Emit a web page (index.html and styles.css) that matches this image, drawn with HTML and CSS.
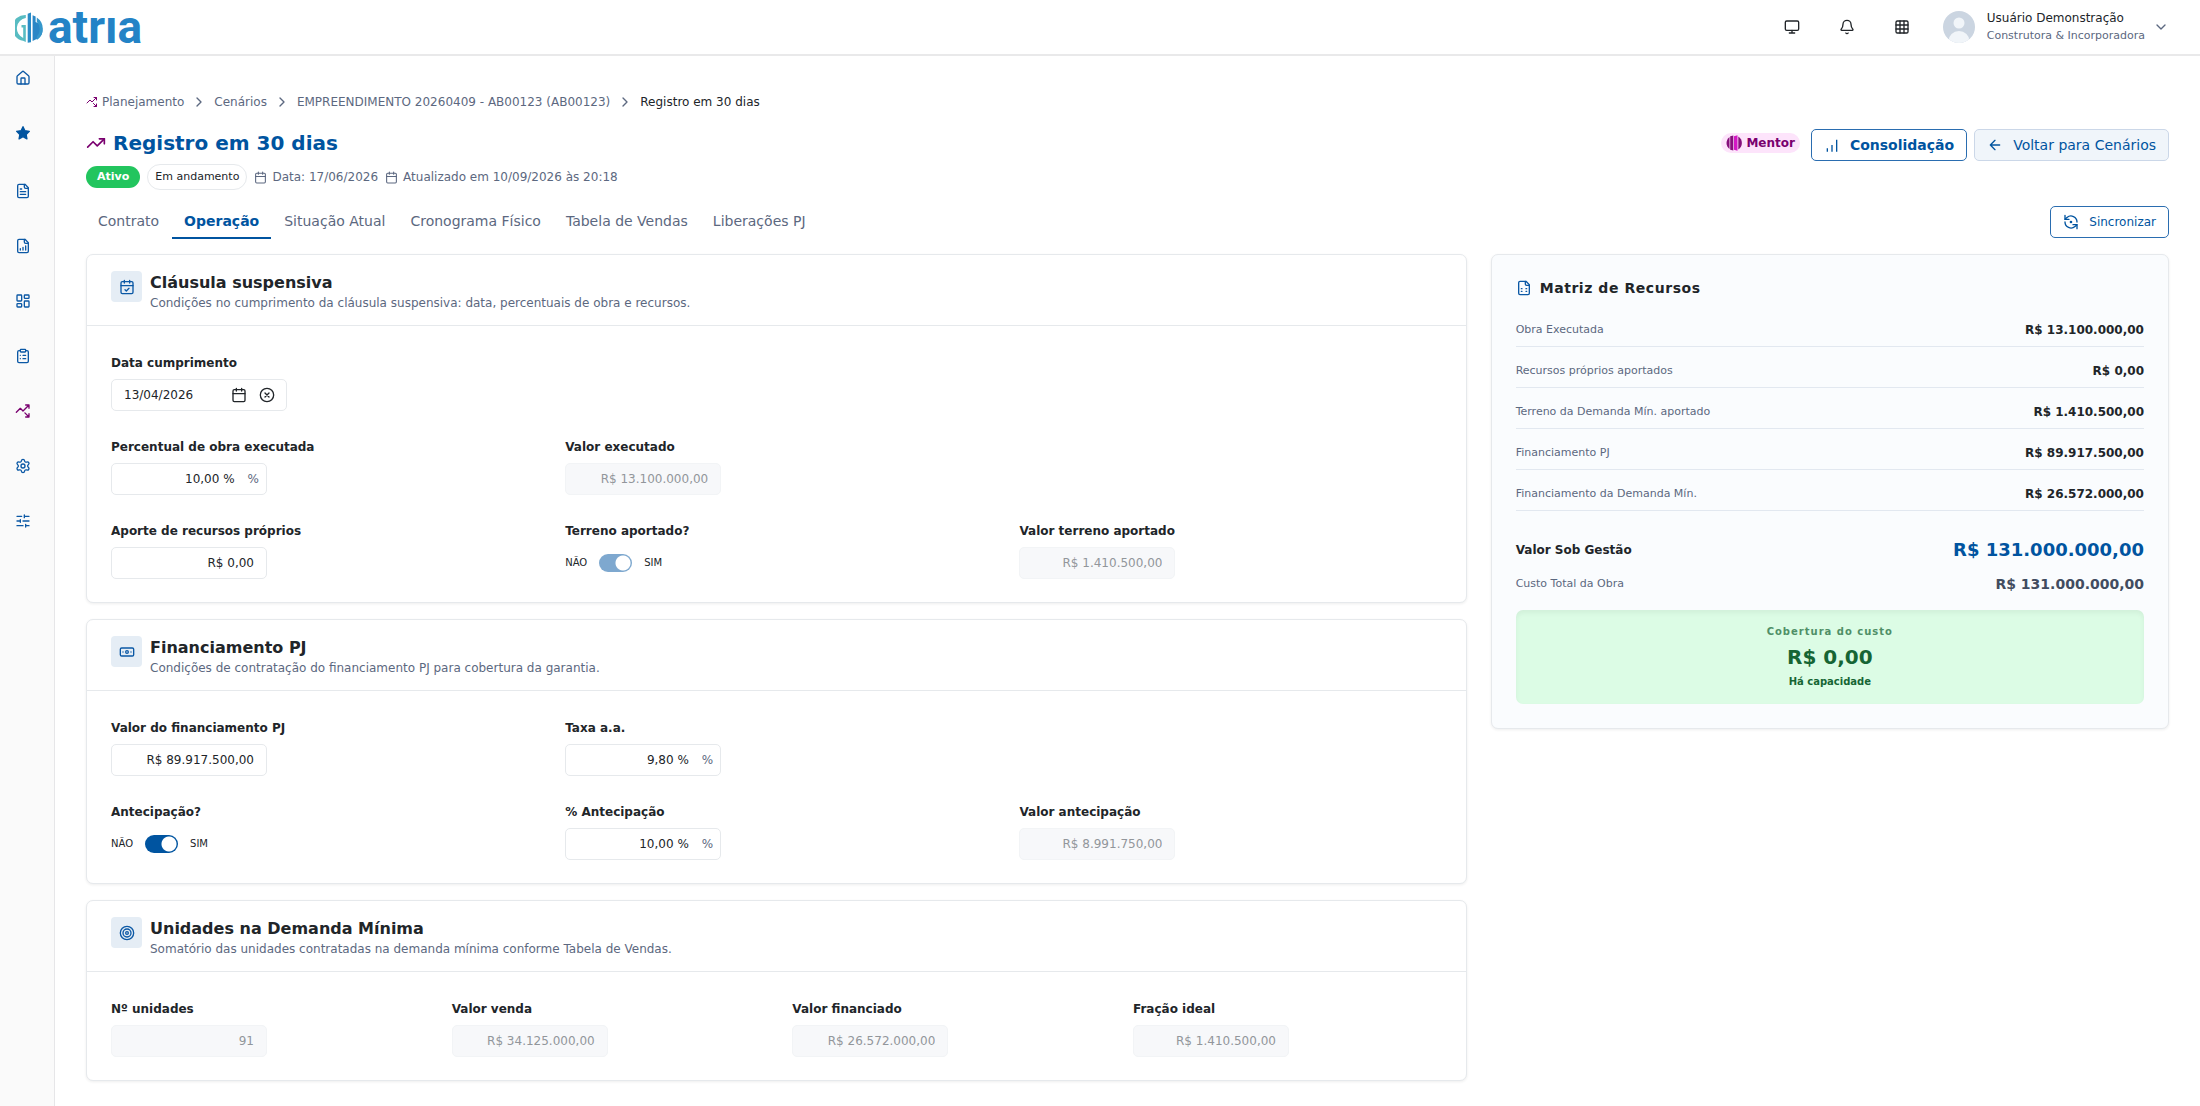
FILE: index.html
```
<!DOCTYPE html>
<html lang="pt-BR">
<head>
  <meta charset="UTF-8">
  <title>Registro em 30 dias - atria</title>
  <meta name="viewport" content="width=device-width, initial-scale=1.0">
  <link rel="stylesheet" href="styles.css">
</head>
<body>
  <!-- Shared icons -->
  <svg class="sprite" aria-hidden="true">
    <symbol id="i-calendar" viewBox="0 0 24 24"><path d="M8 2v4M16 2v4M3 10h18"/><rect width="18" height="18" x="3" y="4" rx="2"/></symbol>
    <symbol id="i-fork" viewBox="0 0 24 24"><path d="M14.828 14.828 21 21M21 16v5h-5M21 3l-9 9-4-4-6 6M21 8V3h-5"/></symbol>
    <symbol id="i-chevron" viewBox="0 0 24 24"><path d="m9 18 6-6-6-6"/></symbol>
  </svg>

  <header class="topbar">
    <a href="#" class="logo">
      <svg class="logo-mark" viewBox="0 0 28 31" aria-hidden="true">
        <path d="M10.800 3A13 13 0 0 0 8 28.800L10.800 30V13H6.500v2.500H8.200v10.500A10.500 10.500 0 0 1 10.800 6z" fill="#58bcc2"/>
        <path d="M12.700 1.800 16 .5v29.700l-3.300.6z" fill="#2a8cc6"/>
        <path d="M17.600 3.200 20.600 4.500V10a9 9 0 0 1 0 17.500l-3 1.500z" fill="#2a86c6"/>
        <path d="M21.800 5.500a13.500 13.500 0 0 1 0 22.500v-3.200a11 11 0 0 0 0-15z" fill="#3597cb"/>
      </svg>
      <span class="logo-text">atrıa</span>
    </a>
    <div class="top-actions">
      <button class="icon-btn" aria-label="Tela"><svg class="icon" viewBox="0 0 24 24"><rect width="20" height="14" x="2" y="3" rx="2"/><path d="M8 21h8M12 17v4"/></svg></button>
      <button class="icon-btn" aria-label="Notificações"><svg class="icon" viewBox="0 0 24 24"><path d="M10.268 21a2 2 0 0 0 3.464 0"/><path d="M3.262 15.326A1 1 0 0 0 4 17h16a1 1 0 0 0 .74-1.673C19.410 13.956 18 12.499 18 8A6 6 0 0 0 6 8c0 4.499-1.411 5.956-2.738 7.326"/></svg></button>
      <button class="icon-btn" aria-label="Aplicativos"><svg class="icon" viewBox="0 0 24 24"><rect width="18" height="18" x="3" y="3" rx="2"/><path d="M3 9h18M3 15h18M9 3v18M15 3v18"/></svg></button>
      <button class="user">
        <svg class="avatar" viewBox="0 0 32 32" aria-hidden="true">
          <clipPath id="round"><circle cx="16" cy="16" r="16"/></clipPath>
          <g clip-path="url(#round)"><rect width="32" height="32" fill="#cbd5e1"/><circle cx="16" cy="12" r="5.500" fill="#f1f5f9"/><ellipse cx="16" cy="30" rx="10.500" ry="10" fill="#f1f5f9"/></g>
        </svg>
        <span class="user-info">
          <span class="user-name">Usuário Demonstração</span>
          <span class="user-company">Construtora &amp; Incorporadora</span>
        </span>
        <svg class="icon muted" viewBox="0 0 24 24"><path d="m6 9 6 6 6-6"/></svg>
      </button>
    </div>
  </header>

  <div class="layout">
    <nav class="sidebar" aria-label="Menu principal">
      <a href="#" aria-label="Início"><svg class="icon" viewBox="0 0 24 24"><path d="M15 21v-8a1 1 0 0 0-1-1h-4a1 1 0 0 0-1 1v8"/><path d="M3 10a2 2 0 0 1 .709-1.528l7-5.999a2 2 0 0 1 2.582 0l7 5.999A2 2 0 0 1 21 10v9a2 2 0 0 1-2 2H5a2 2 0 0 1-2-2z"/></svg></a>
      <a href="#" class="favorites" aria-label="Favoritos"><svg class="icon filled" viewBox="0 0 24 24"><path d="M12 2.500l2.900 6.100 6.600.9-4.800 4.600 1.200 6.700-5.900-3.200-5.900 3.200 1.200-6.700L2.500 9.500l6.600-.9z"/></svg></a>
      <a href="#" aria-label="Documentos"><svg class="icon" viewBox="0 0 24 24"><path d="M15 2H6a2 2 0 0 0-2 2v16a2 2 0 0 0 2 2h12a2 2 0 0 0 2-2V7z"/><path d="M14 2v4a2 2 0 0 0 2 2h4M10 9H8M16 13H8M16 17H8"/></svg></a>
      <a href="#" aria-label="Relatórios"><svg class="icon" viewBox="0 0 24 24"><path d="M15 2H6a2 2 0 0 0-2 2v16a2 2 0 0 0 2 2h12a2 2 0 0 0 2-2V7z"/><path d="M14 2v4a2 2 0 0 0 2 2h4M8 18v-2M12 18v-4M16 18v-6"/></svg></a>
      <a href="#" aria-label="Painel"><svg class="icon" viewBox="0 0 24 24"><rect width="7" height="9" x="3" y="3" rx="1"/><rect width="7" height="5" x="14" y="3" rx="1"/><rect width="7" height="9" x="14" y="12" rx="1"/><rect width="7" height="5" x="3" y="16" rx="1"/></svg></a>
      <a href="#" aria-label="Tarefas"><svg class="icon" viewBox="0 0 24 24"><rect width="8" height="4" x="8" y="2" rx="1"/><path d="M16 4h2a2 2 0 0 1 2 2v14a2 2 0 0 1-2 2H6a2 2 0 0 1-2-2V6a2 2 0 0 1 2-2h2M12 11h4M12 16h4M8 11h.01M8 16h.01"/></svg></a>
      <a href="#" class="active" aria-label="Planejamento"><svg class="icon"><use href="#i-fork"/></svg></a>
      <a href="#" aria-label="Configurações"><svg class="icon" viewBox="0 0 24 24"><path d="M9.671 4.136a2.340 2.340 0 0 1 4.659 0 2.340 2.340 0 0 0 3.319 1.915 2.340 2.340 0 0 1 2.330 4.033 2.340 2.340 0 0 0 0 3.831 2.340 2.340 0 0 1-2.330 4.033 2.340 2.340 0 0 0-3.319 1.915 2.340 2.340 0 0 1-4.659 0 2.340 2.340 0 0 0-3.320-1.915 2.340 2.340 0 0 1-2.330-4.033 2.340 2.340 0 0 0 0-3.831A2.340 2.340 0 0 1 6.350 6.051a2.340 2.340 0 0 0 3.319-1.915"/><circle cx="12" cy="12" r="3"/></svg></a>
      <a href="#" aria-label="Parâmetros"><svg class="icon" viewBox="0 0 24 24"><path d="M10 5H3M12 19H3M14 3v4M16 17v4M21 12h-9M21 19h-5M21 5h-7M8 10v4M8 12H3"/></svg></a>
    </nav>

    <main>
      <nav class="breadcrumb" aria-label="Trilha">
        <a href="#"><svg class="icon accent"><use href="#i-fork"/></svg>Planejamento</a>
        <svg class="icon"><use href="#i-chevron"/></svg>
        <a href="#">Cenários</a>
        <svg class="icon"><use href="#i-chevron"/></svg>
        <a href="#">EMPREENDIMENTO 20260409 - AB00123 (AB00123)</a>
        <svg class="icon"><use href="#i-chevron"/></svg>
        <span class="current">Registro em 30 dias</span>
      </nav>

      <div class="page-head">
        <div>
          <div class="title-row">
            <svg class="icon accent" viewBox="0 0 24 24"><path d="M16 7h6v6"/><path d="m22 7-8.500 8.500-5-5L2 17"/></svg>
            <h1>Registro em 30 dias</h1>
          </div>
          <div class="meta">
            <span class="badge badge-active">Ativo</span>
            <span class="badge badge-outline">Em andamento</span>
            <span class="meta-item"><svg class="icon"><use href="#i-calendar"/></svg>Data: 17/06/2026</span>
            <span class="meta-item"><svg class="icon"><use href="#i-calendar"/></svg>Atualizado em 10/09/2026 às 20:18</span>
          </div>
        </div>
        <div class="page-actions">
          <span class="mentor">
            <svg class="mentor-mark" viewBox="0 0 16 16" aria-hidden="true">
              <path d="M3.500 2v12A7.500 7.500 0 0 1 3.500 2z" fill="#86107c"/><path d="M4.200 1.300 7.300.5v15l-3.100-.8z" fill="#86107c"/><path d="M8 1.200 11.500.2v15.600L8 14.800z" fill="#d417c4"/><path d="M12.300 1.500v13a7.700 7.700 0 0 0 0-13z" fill="#86107c"/>
            </svg>
            Mentor
          </span>
          <button class="btn btn-strong"><svg class="icon thin" viewBox="0 0 24 24"><path d="M5 22v-5M12 22V12M19 22V4"/></svg>Consolidação</button>
          <button class="btn btn-soft"><svg class="icon" viewBox="0 0 24 24"><path d="m12 19-7-7 7-7M19 12H5"/></svg>Voltar para Cenários</button>
        </div>
      </div>

      <div class="tabs-row">
        <nav class="tabs" aria-label="Seções">
          <a href="#">Contrato</a>
          <a href="#" class="active">Operação</a>
          <a href="#">Situação Atual</a>
          <a href="#">Cronograma Físico</a>
          <a href="#">Tabela de Vendas</a>
          <a href="#">Liberações PJ</a>
        </nav>
        <button class="btn btn-small"><svg class="icon" viewBox="0 0 24 24"><path d="M3 2v6h6"/><path d="M21 12A9 9 0 0 0 6 5.300L3 8"/><path d="M21 22v-6h-6"/><path d="M3 12a9 9 0 0 0 15 6.700l3-2.700"/><circle cx="12" cy="12" r="1"/></svg>Sincronizar</button>
      </div>

      <div class="content">
        <div class="cards">
          <section class="card">
            <div class="card-head">
              <span class="card-icon"><svg class="icon" viewBox="0 0 24 24"><path d="M8 2v4M16 2v4M3 10h18M9 16l2 2 4-4"/><rect width="18" height="18" x="3" y="4" rx="2"/></svg></span>
              <div>
                <h2>Cláusula suspensiva</h2>
                <p>Condições no cumprimento da cláusula suspensiva: data, percentuais de obra e recursos.</p>
              </div>
            </div>
            <div class="card-body">
              <div class="fields cols-3">
                <div class="field">
                  <label for="dataCumprimento">Data cumprimento</label>
                  <div class="control control-date">
                    <input type="text" id="dataCumprimento" value="13/04/2026">
                    <button aria-label="Abrir calendário"><svg class="icon"><use href="#i-calendar"/></svg></button>
                    <button aria-label="Limpar data"><svg class="icon" viewBox="0 0 24 24"><circle cx="12" cy="12" r="10"/><path d="m15 9-6 6M9 9l6 6"/></svg></button>
                  </div>
                </div>
              </div>
              <div class="fields cols-3">
                <div class="field">
                  <label for="percObra">Percentual de obra executada</label>
                  <div class="control"><input type="text" id="percObra" value="10,00 %"><span class="suffix">%</span></div>
                </div>
                <div class="field">
                  <label for="valorExecutado">Valor executado</label>
                  <div class="control disabled"><input type="text" id="valorExecutado" value="R$ 13.100.000,00" disabled></div>
                </div>
              </div>
              <div class="fields cols-3">
                <div class="field">
                  <label for="aporte">Aporte de recursos próprios</label>
                  <div class="control"><input type="text" id="aporte" value="R$ 0,00"></div>
                </div>
                <div class="field">
                  <label for="terreno">Terreno aportado?</label>
                  <div class="switch"><span>NÃO</span><input type="checkbox" id="terreno" checked disabled><span>SIM</span></div>
                </div>
                <div class="field">
                  <label for="valorTerreno">Valor terreno aportado</label>
                  <div class="control disabled"><input type="text" id="valorTerreno" value="R$ 1.410.500,00" disabled></div>
                </div>
              </div>
            </div>
          </section>

          <section class="card">
            <div class="card-head">
              <span class="card-icon"><svg class="icon" viewBox="0 0 24 24"><rect width="20" height="12" x="2" y="6" rx="2"/><circle cx="12" cy="12" r="2"/><path d="M6 12h.01M18 12h.01"/></svg></span>
              <div>
                <h2>Financiamento PJ</h2>
                <p>Condições de contratação do financiamento PJ para cobertura da garantia.</p>
              </div>
            </div>
            <div class="card-body">
              <div class="fields cols-3">
                <div class="field">
                  <label for="valorPj">Valor do financiamento PJ</label>
                  <div class="control"><input type="text" id="valorPj" value="R$ 89.917.500,00"></div>
                </div>
                <div class="field">
                  <label for="taxa">Taxa a.a.</label>
                  <div class="control"><input type="text" id="taxa" value="9,80 %"><span class="suffix">%</span></div>
                </div>
              </div>
              <div class="fields cols-3">
                <div class="field">
                  <label for="antecipacao">Antecipação?</label>
                  <div class="switch"><span>NÃO</span><input type="checkbox" id="antecipacao" checked><span>SIM</span></div>
                </div>
                <div class="field">
                  <label for="percAntecipacao">% Antecipação</label>
                  <div class="control"><input type="text" id="percAntecipacao" value="10,00 %"><span class="suffix">%</span></div>
                </div>
                <div class="field">
                  <label for="valorAntecipacao">Valor antecipação</label>
                  <div class="control disabled"><input type="text" id="valorAntecipacao" value="R$ 8.991.750,00" disabled></div>
                </div>
              </div>
            </div>
          </section>

          <section class="card">
            <div class="card-head">
              <span class="card-icon"><svg class="icon" viewBox="0 0 24 24"><circle cx="12" cy="12" r="10"/><circle cx="12" cy="12" r="6"/><circle cx="12" cy="12" r="2"/></svg></span>
              <div>
                <h2>Unidades na Demanda Mínima</h2>
                <p>Somatório das unidades contratadas na demanda mínima conforme Tabela de Vendas.</p>
              </div>
            </div>
            <div class="card-body">
              <div class="fields cols-4">
                <div class="field">
                  <label for="unidades">Nº unidades</label>
                  <div class="control disabled"><input type="text" id="unidades" value="91" disabled></div>
                </div>
                <div class="field">
                  <label for="valorVenda">Valor venda</label>
                  <div class="control disabled"><input type="text" id="valorVenda" value="R$ 34.125.000,00" disabled></div>
                </div>
                <div class="field">
                  <label for="valorFinanciado">Valor financiado</label>
                  <div class="control disabled"><input type="text" id="valorFinanciado" value="R$ 26.572.000,00" disabled></div>
                </div>
                <div class="field">
                  <label for="fracao">Fração ideal</label>
                  <div class="control disabled"><input type="text" id="fracao" value="R$ 1.410.500,00" disabled></div>
                </div>
              </div>
            </div>
          </section>
        </div>

        <aside class="matrix">
          <h2><svg class="icon" viewBox="0 0 24 24"><path d="M15 2H6a2 2 0 0 0-2 2v16a2 2 0 0 0 2 2h12a2 2 0 0 0 2-2V7z"/><path d="M14 2v4a2 2 0 0 0 2 2h4M8 13h1M15 13h1M8 17h1M15 17h1"/></svg>Matriz de Recursos</h2>
          <dl class="matrix-list">
            <div><dt>Obra Executada</dt><dd>R$ 13.100.000,00</dd></div>
            <div><dt>Recursos próprios aportados</dt><dd>R$ 0,00</dd></div>
            <div><dt>Terreno da Demanda Mín. aportado</dt><dd>R$ 1.410.500,00</dd></div>
            <div><dt>Financiamento PJ</dt><dd>R$ 89.917.500,00</dd></div>
            <div><dt>Financiamento da Demanda Mín.</dt><dd>R$ 26.572.000,00</dd></div>
          </dl>
          <dl class="matrix-totals">
            <div class="total"><dt>Valor Sob Gestão</dt><dd>R$ 131.000.000,00</dd></div>
            <div class="cost"><dt>Custo Total da Obra</dt><dd>R$ 131.000.000,00</dd></div>
          </dl>
          <div class="coverage">
            <span class="coverage-label">Cobertura do custo</span>
            <strong>R$ 0,00</strong>
            <span class="coverage-status">Há capacidade</span>
          </div>
        </aside>
      </div>
    </main>
  </div>
</body>
</html>
```

FILE: styles.css
```
:root { --blue: #0054a0; --purple: #7a006f; --text: #212529; --muted: #5c6880; --line: #e6e9ec;}
* { box-sizing: border-box;}
body { font-family: 'DejaVu Sans', sans-serif; font-size: 12px; line-height: 18px; color: var(--text); background: #fff; margin: 0; min-height: 100vh; display: flex; flex-direction: column;}
a { color: inherit; text-decoration: none;}
button, input { font: inherit; color: inherit;}
button { background: none; border: none; padding: 0; cursor: pointer;}
h1, h2, p, dl, dd { margin: 0;}
.sprite { display: none;}
.icon { width: 16px; height: 16px; flex: none; display: block; fill: none; stroke: currentColor; stroke-width: 2; stroke-linecap: round; stroke-linejoin: round;}
.icon.filled { fill: currentColor;}
.icon.accent { color: var(--purple);}
.icon.muted { color: var(--muted);}

/* Top bar */
.topbar { height: 56px; flex: none; display: flex; align-items: center; justify-content: space-between; padding: 0 31px 0 15px; border-bottom: 2px solid #e9e9ea;}
.logo { display: flex; align-items: center; gap: 5px; height: 54px;}
.logo-mark { width: 28px; height: 31px;}
.logo-text { font-family: 'Roboto', sans-serif; font-weight: 700; font-size: 46px; line-height: 48px; color: #2383c6;}
.top-actions { display: flex; align-items: center; gap: 39px;}
.user { display: flex; align-items: center; text-align: left; margin-left: -6px;}
.avatar { width: 32px; height: 32px; margin-right: 12px;}
.user-info { display: flex; flex-direction: column; margin-right: 8px;}
.user-company { font-size: 11px; color: var(--muted);}

/* Side menu */
.layout { flex: 1; display: flex;}
.sidebar { width: 55px; flex: none; background: #fafafa; border-right: 1px solid #e6e6e8; padding: 14px 0 0 15px; display: flex; flex-direction: column; gap: 39px; color: #0b58a5;}
.sidebar a { width: 16px;}
.sidebar .favorites { margin-bottom: 3px; color: var(--blue);}
.sidebar .active { color: var(--purple);}

/* Page */
main { flex: 1; min-width: 0; padding: 37px 31px 24px 31px;}
.breadcrumb { display: flex; align-items: center; gap: 7px; color: var(--muted);}
.breadcrumb a { display: flex; align-items: center; gap: 4px;}
.breadcrumb .accent { width: 12px; height: 12px;}
.breadcrumb .current { color: var(--text);}
.page-head { display: flex; justify-content: space-between; align-items: flex-start; margin-top: 18px;}
.title-row { display: flex; align-items: center; gap: 7px;}
.title-row .icon { width: 20px; height: 20px;}
h1 { font-size: 20px; line-height: 28px; color: var(--blue);}
.meta { display: flex; align-items: center; gap: 7px; margin-top: 7px; color: var(--muted);}
.meta-item { display: flex; align-items: center; gap: 5px;}
.meta-item .icon { width: 13px; height: 13px;}
.badge { font-size: 11px; border-radius: 13px;}
.badge-active { background: #22c55e; color: #fff; font-weight: 700; line-height: 22px; padding: 0 11px;}
.badge-outline { border: 1px solid var(--line); color: var(--text); line-height: 24px; padding: 0 7px;}
.page-actions { display: flex; gap: 7px;}
.mentor { display: flex; align-items: center; gap: 4px; align-self: flex-start; margin: 4px 4px 0 0; height: 20px; padding: 0 5px; border-radius: 10px; background: #fde4fb; color: var(--purple); font-weight: 700;}
.mentor-mark { width: 16px; height: 16px;}
.btn { display: flex; align-items: center; gap: 10px; height: 32px; padding: 0 12px; border: 1px solid #2a6db0; border-radius: 5px; color: var(--blue); background: #fff; font-size: 14px;}
.btn-strong { font-weight: 700;}
.btn-strong .icon { stroke-linecap: butt;}
.btn-soft { background: #f0f5fa; border-color: #cbd7e8;}
.btn-small { font-size: 12px;}

/* Tabs */
.tabs-row { display: flex; align-items: center; justify-content: space-between; margin-top: 14px; height: 35px;}
.tabs { display: flex; gap: 1px; color: var(--muted);}
.tabs a { font-size: 14px; line-height: 18px; padding: 8px 12px 7px; border-bottom: 2px solid transparent;}
.tabs a.active { color: var(--blue); font-weight: 700; border-bottom-color: var(--blue);}

/* Cards */
.content { display: grid; grid-template-columns: repeat(12, minmax(0, 1fr)); gap: 24px; margin-top: 15px; align-items: start;}
.cards { grid-column: span 8; display: flex; flex-direction: column; gap: 16px;}
.card { border: 1px solid var(--line); border-radius: 7px; background: #fff; box-shadow: 0 1px 3px rgba(0,0,0,0.07);}
.card-head { display: flex; gap: 8px; padding: 16px 24px 13px; border-bottom: 1px solid var(--line);}
.card-head h2 { font-size: 16px; line-height: 23px;}
.card-head p { color: var(--muted);}
.card-icon { width: 31px; height: 31px; display: flex; align-items: center; justify-content: center; border-radius: 4px; background: #e5edf5; color: #0b58a5;}
.card-body { display: flex; flex-direction: column; gap: 26px; padding: 28px 24px 23px;}
.fields { display: grid; column-gap: 32px;}
.cols-3 { grid-template-columns: repeat(3, minmax(0, 1fr));}
.cols-4 { grid-template-columns: repeat(4, minmax(0, 1fr));}
.fields + .fields { margin-top: 1px;}
.field label { display: block; font-weight: 700; margin-bottom: 7px;}
.control { display: flex; align-items: center; width: 156px; height: 32px; padding: 0 12px; border: 1px solid var(--line); border-radius: 5px; background: #fff;}
.control input { flex: 1; min-width: 0; padding: 0; border: none; outline: none; background: none; text-align: right;}
.control .suffix { color: var(--muted); margin: 0 -5px 0 13px;}
.control.disabled { background: #f7f8fa; border-color: #f2f4f6;}
.control.disabled input { color: #92969b;}
.control-date { width: 176px; gap: 12px;}
.control-date input { text-align: left;}
.control-date button:last-child { margin-right: -1px;}
.switch { display: flex; align-items: center; gap: 12px; height: 32px; font-size: 10px;}
.switch input { appearance: none; width: 33px; height: 18px; margin: 0; border-radius: 9px; background: radial-gradient(circle at 24px 9px, #fff 7px, transparent 8px) var(--blue);}
.switch input:disabled { opacity: 0.5;}

/* Resource matrix */
.matrix { grid-column: span 4; padding: 24px; border: 1px solid var(--line); border-radius: 7px; background: #fafcfe; box-shadow: 0 1px 3px rgba(0,0,0,0.07);}
.matrix h2 { display: flex; align-items: center; gap: 8px; font-size: 14px; line-height: 18px; letter-spacing: 0.04em; margin-bottom: 9px;}
.matrix h2 .icon { color: #0b58a5;}
.matrix dl div { display: flex; align-items: center; justify-content: space-between;}
.matrix dt { font-size: 11px; color: var(--muted);}
.matrix dd { font-weight: 700;}
.matrix-list div { padding: 15px 0 7px; border-bottom: 1px solid #e2e8f0;}
.matrix-totals { margin: 27px 0 16px; display: flex; flex-direction: column; gap: 12px;}
.matrix .total dt { font-size: 12px; font-weight: 700; color: var(--text);}
.matrix .total dd { font-size: 18px; line-height: 24px; color: var(--blue);}
.matrix .cost dd { font-size: 14px; line-height: 20px; color: #414c60;}
.coverage { display: flex; flex-direction: column; align-items: center; gap: 3px; padding: 14px; border-radius: 7px; background: #dcfce5; box-shadow: inset 0 3px 5px rgba(0,0,0,0.05); color: #166534; font-size: 10px; line-height: 16px; font-weight: 700;}
.coverage strong { font-size: 20px; line-height: 28px;}
.coverage-label { letter-spacing: 1px; color: #4f8f67;}
@media (max-width: 1100px) { .cards, .matrix { grid-column: span 12; } }
```
